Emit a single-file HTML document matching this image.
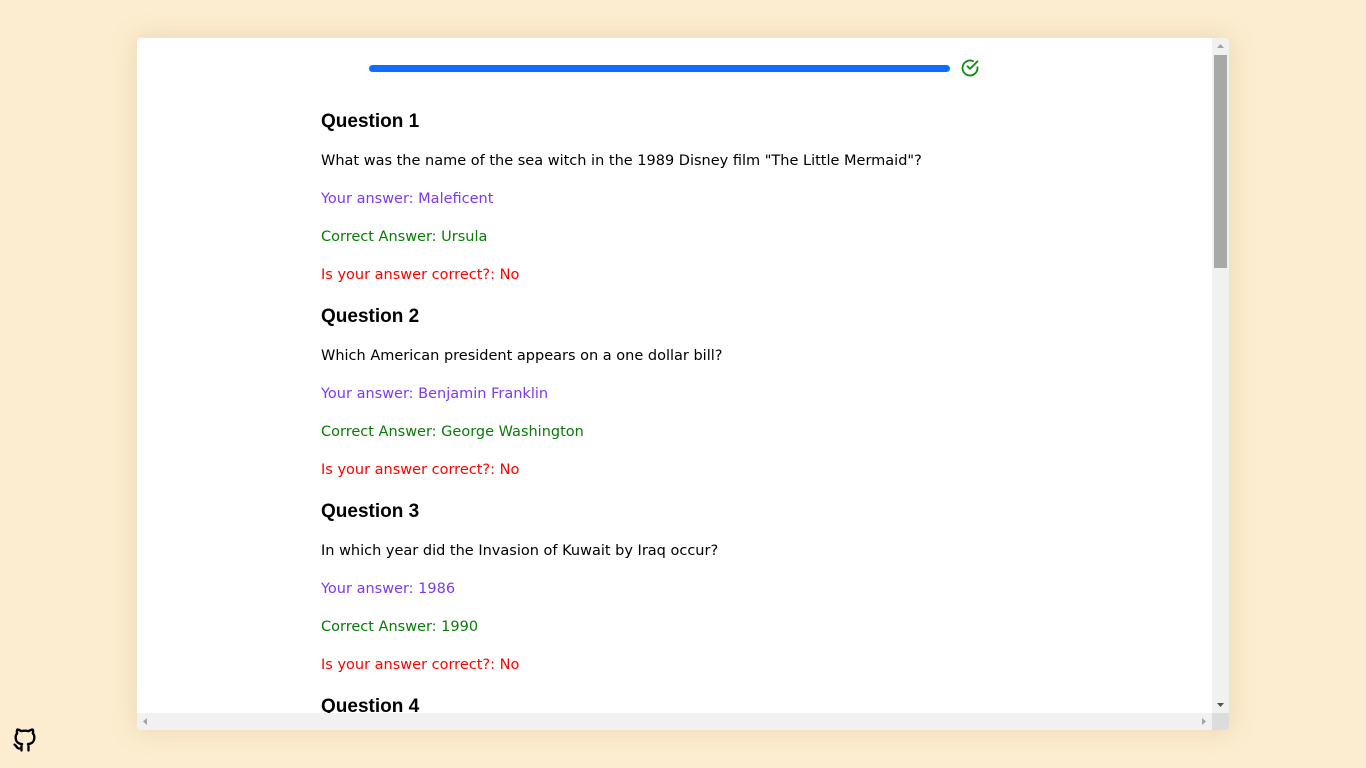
<!DOCTYPE html>
<html><head><meta charset="utf-8"><style>
*{margin:0;padding:0;box-sizing:border-box}
html,body{width:1366px;height:768px;overflow:hidden;background:#fcedd0;font-family:"Liberation Sans",sans-serif}
#box{position:absolute;left:137px;top:38px;width:1092px;height:692px;background:#fff;border-radius:4px;box-shadow:0 0 24px rgba(200,170,110,.35);overflow:hidden}
.vs{position:absolute;left:1075px;top:0;width:17px;height:675px;background:#f1f1f1}
.vt{position:absolute;left:2px;top:17px;width:13px;height:213px;background:#a8a8a8}
.hs{position:absolute;left:0;top:675px;width:1075px;height:17px;background:#f1f1f1}
.corner{position:absolute;left:1075px;top:675px;width:17px;height:17px;background:#dcdcdc}
.bar{position:absolute;left:232px;top:27px;width:581px;height:7px;border-radius:4px;background:#0d6efd}
.chk{position:absolute;left:823px;top:20px}
.t{position:absolute;left:184px;font-family:"DejaVu Sans",sans-serif;font-size:14.5px;line-height:20px;white-space:nowrap}
h3{position:absolute;left:184px;font-size:19px;font-weight:bold;line-height:24px}
.p{color:#7c3aed}.g{color:#0a7a0a}.r{color:#f00}
</style></head><body>
<div id="box">
<div class="bar"></div>
<svg class="chk" width="20" height="20" viewBox="0 0 24 24" fill="none" stroke="#138a13" stroke-width="2.2" stroke-linecap="round" stroke-linejoin="round"><path d="M21 11.1V12a9 9 0 1 1-5.3-8.2"/><path d="M21 4 12 13l-3-3"/></svg>

<h3 style="top:72px">Question 1</h3>
<div class="t" style="top:113px">What was the name of the sea witch in the 1989 Disney film "The Little Mermaid"?</div>
<div class="t p" style="top:151px">Your answer: Maleficent</div>
<div class="t g" style="top:189px">Correct Answer: Ursula</div>
<div class="t r" style="top:227px">Is your answer correct?: No</div>

<h3 style="top:267px">Question 2</h3>
<div class="t" style="top:308px">Which American president appears on a one dollar bill?</div>
<div class="t p" style="top:346px">Your answer: Benjamin Franklin</div>
<div class="t g" style="top:384px">Correct Answer: George Washington</div>
<div class="t r" style="top:422px">Is your answer correct?: No</div>

<h3 style="top:462px">Question 3</h3>
<div class="t" style="top:503px">In which year did the Invasion of Kuwait by Iraq occur?</div>
<div class="t p" style="top:541px">Your answer: 1986</div>
<div class="t g" style="top:579px">Correct Answer: 1990</div>
<div class="t r" style="top:617px">Is your answer correct?: No</div>

<h3 style="top:657px">Question 4</h3>

<div class="vs"><svg width="17" height="17" style="position:absolute;top:0"><path d="M5 10h7L8.5 6z" fill="#a3a3a3"/></svg><div class="vt"></div><svg width="17" height="17" style="position:absolute;top:658px"><path d="M5 7h7l-3.5 4z" fill="#505050"/></svg></div>
<div class="hs"><svg width="17" height="17"><path d="M10 5v7L6 8.5z" fill="#a3a3a3"/></svg><svg width="17" height="17" style="position:absolute;left:1058px"><path d="M7 5v7l4-3.5z" fill="#a3a3a3"/></svg></div>
<div class="corner"></div>
</div>
<svg style="position:absolute;left:11px;top:726px" width="28" height="28" viewBox="0 0 24 24" fill="none" stroke="#000" stroke-width="2" stroke-linecap="round" stroke-linejoin="round"><path d="M9 19c-4.3 1.4-4.3-2.5-6-3m12 5v-3.5c0-1 .1-1.4-.5-2 2.8-.3 5.5-1.4 5.5-6a4.600 4.600 0 0 0-1.3-3.2 4.2 4.2 0 0 0-.1-3.2s-1.1-.3-3.5 1.3a12.3 12.3 0 0 0-6.2 0C6.5 2.8 5.4 3.1 5.4 3.1a4.2 4.2 0 0 0-.1 3.2A4.600 4.600 0 0 0 4 9.5c0 4.600 2.7 5.7 5.5 6-.6.6-.6 1.2-.5 2V21"/></svg>
</body></html>
